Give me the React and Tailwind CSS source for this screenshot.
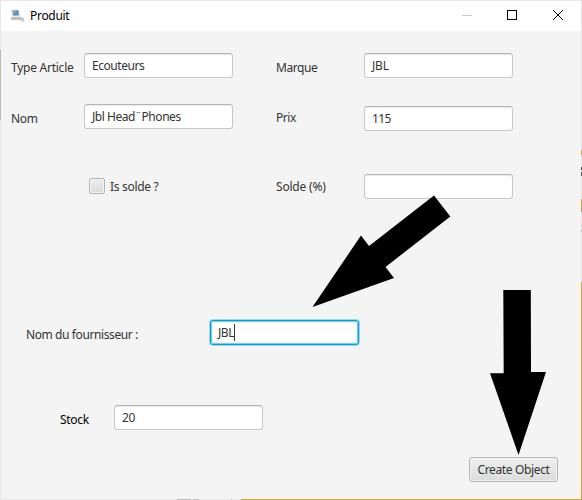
import React from "react";

function Label({ className = "", children }) {
  return (
    <span className={`block shrink-0 whitespace-nowrap leading-[16px] ${className}`}>{children}</span>
  );
}

function Field({ value, className = "", focused = false }) {
  const look = focused
    ? "border-[#039ed3] shadow-[0_0_0_1px_#9fd6ea,inset_0_0_0_1px_#7fcbe6,inset_0_0_2px_2px_#e3f5fa]"
    : "border-[#c8c8c8] border-t-[#b5b5b5] shadow-[inset_0_1px_1px_#e9e9e9]";
  return (
    <div
      className={`flex h-[25px] w-[149px] shrink-0 items-center rounded-[3px] border bg-white pl-[7px] ${look} ${className}`}
    >
      <span className="whitespace-nowrap leading-[16px]">{value}</span>
      {focused && <span className="h-[17px] w-px bg-[#333]" />}
    </div>
  );
}

function AppIcon() {
  return (
    <svg className="ml-[9px] mt-[8px] h-[14px] w-[15px]" viewBox="0 0 15 14">
      <path d="M1.200 1 9 0.500 10 7.200 2.500 7.700Z" fill="#cbd6df" />
      <path d="M2.400 1.700 8.200 1.400 8.900 6.200 3.400 6.500Z" fill="#5a8fbd" />
      <path d="M2.400 1.700 6.400 1.500 3.400 5.400Z" fill="#86b1d4" />
      <path d="M0.500 8.300 10 7.800 12.500 9.700 10.500 11.200 1 11Z" fill="#cacaca" />
      <path d="M1.500 9.500 10 9.300" stroke="#a8a8a8" strokeWidth=".8" />
      <path d="M10 8.500 13.500 9.500" stroke="#b0b0b0" strokeWidth=".9" />
      <circle cx="12.500" cy="10.900" r="1.400" fill="#e8e8e8" stroke="#b0b0b0" strokeWidth=".9" />
    </svg>
  );
}

function TitleBar() {
  return (
    <header className="flex h-[30px] bg-white text-black">
      <AppIcon />
      <Label className="ml-[5px] mt-[7px] tracking-[-0.3px]">Produit</Label>
      <svg className="ml-auto mr-[13px] h-[30px] w-[106px]" viewBox="0 0 106 30" fill="none" shapeRendering="crispEdges">
        <path d="M0 14.500H10" stroke="#c7c7c7" />
        <rect x="45.500" y="9.500" width="9" height="9" stroke="#000" />
        <path d="M91 9 101 19M101 9 91 19" stroke="#000" shapeRendering="auto" />
      </svg>
    </header>
  );
}

export default function App() {
  return (
    <div className="relative h-[500px] w-[582px] border border-[#e7e7e7] bg-[#f4f4f4] font-['Noto_Sans','Open_Sans',sans-serif] text-[12px] tracking-[-0.45px] text-[#333]">
      <TitleBar />
      <main>
        <div className="flex h-[73px] pt-[22px]">
          <Label className="mt-[7px] w-[73px] pl-[10px] tracking-[-0.25px]">Type Article</Label>
          <Field value="Ecouteurs" className="ml-[10px]" />
          <Label className="ml-[43px] mt-[7px] w-[88px]">Marque</Label>
          <Field value="JBL" className="tracking-[-0.2px]" />
        </div>
        <div className="flex h-[70px]">
          <Label className="mt-[7px] w-[83px] pl-[10px] tracking-[-0.3px]">Nom</Label>
          <Field value="Jbl Head¨Phones" />
          <Label className="ml-[43px] mt-[6px] w-[88px]">Prix</Label>
          <Field value="115" className="mt-[2px] tracking-[-0.6px]" />
        </div>
        <div className="flex h-[146px]">
          <div className="ml-[88px] mt-[4px] h-[16px] w-[16px] rounded-[2px] border border-[#b5b5b5] bg-linear-to-b from-[#eeeeee] to-[#dcdcdc] shadow-[inset_0_0_0_1px_#f3f3f3]" />
          <Label className="ml-[5px] mt-[5px] w-[166px] tracking-[-0.3px]">Is solde ?</Label>
          <Label className="mt-[5px] w-[88px] tracking-[-0.2px]">Solde (%)</Label>
          <Field value="" />
        </div>
        <div className="flex h-[85px]">
          <Label className="mt-[7px] w-[184px] pl-[25px] tracking-[-0.4px]">Nom du fournisseur :</Label>
          <Field value="JBL" focused className="ml-[25px]" />
        </div>
        <div className="flex h-[52px]">
          <Label className="mt-[7px] w-[113px] pl-[59px] tracking-[-0.3px] text-black">Stock</Label>
          <Field value="20" />
        </div>
        <button className="ml-[468px] flex h-[25px] w-[89px] items-center justify-center whitespace-nowrap rounded-[3px] border border-[#b5b5b5] bg-linear-to-b from-[#eeeeee] to-[#dcdcdc] leading-[16px] tracking-[-0.35px] shadow-[inset_0_0_0_1px_#f3f3f3]">
          Create Object
        </button>
      </main>
      <svg className="pointer-events-none absolute -left-px -top-px h-[500px] w-[582px]" viewBox="0 0 582 500">
        <path d="M312.500 307 361 235.500 369 246 434 195.500 450.300 216.500 385.500 267 394 278Z" />
        <path d="M503.300 290H530.800L531 372H546L518.500 455 490 373.200H503.700Z" />
        <path d="M0 50H1V120H0Z" fill="#b9b9b9" />
        <path d="M581 282H582V500H241V499H581Z" fill="#e2a02c" />
        <path d="M581 199H582V212H581ZM581 150H582V155H581Z" fill="#e2a02c" />
        <path d="M581 167H582V170H581ZM581 172H582V176H581Z" fill="#555" />
        <path d="M177 499H191V500H177ZM193 499H199V500H193ZM231 499H232V500H231ZM581 225H582V226H581ZM581 230H582V232H581Z" fill="#bdbdbd" />
      </svg>
    </div>
  );
}
